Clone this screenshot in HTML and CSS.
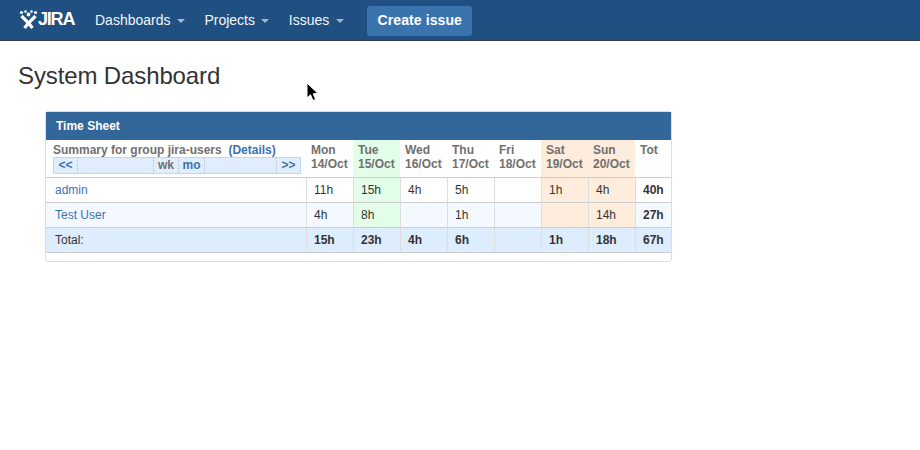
FILE: index.html
```html
<!DOCTYPE html>
<html lang="en">
<head>
<meta charset="UTF-8">
<title>System Dashboard</title>
<link rel="stylesheet" href="styles.css">
</head>
<body>
<header class="topbar">
    <a class="logo" href="#">
        <svg class="logo-icon" width="19" height="20" viewBox="0 0 19 20">
            <circle cx="2.5" cy="2.5" r="1.6" fill="#fff"/>
            <circle cx="6.5" cy="1.6" r="1.3" fill="#fff"/>
            <circle cx="12.5" cy="1.6" r="1.3" fill="#fff"/>
            <circle cx="16.5" cy="2.5" r="1.6" fill="#fff"/>
            <circle cx="9.5" cy="4.5" r="1.9" fill="#fff"/>
            <path d="M2.5 6 L9.5 13 L5.5 18 M16.5 6 L9.5 13 L13.5 18" fill="none" stroke="#fff" stroke-width="3.2"/>
        </svg>
        <span class="logo-text">JIRA</span>
    </a>
    <nav class="menu">
        <a href="#">Dashboards <i class="caret"></i></a>
        <a href="#">Projects <i class="caret"></i></a>
        <a href="#">Issues <i class="caret"></i></a>
    </nav>
    <button class="create-btn">Create issue</button>
</header>

<h1 class="page-title">System Dashboard</h1>

<section class="gadget">
    <div class="gadget-title">Time Sheet</div>
    <table class="sheet">
        <thead>
            <tr>
                <th class="summary">
                    <div class="summary-text">Summary for group jira-users &nbsp;<a href="#">(Details)</a></div>
                    <div class="pager">
                        <a class="p-prev" href="#">&lt;&lt;</a>
                        <span class="p-fill"></span>
                        <span class="p-wk">wk</span>
                        <a class="p-mo" href="#">mo</a>
                        <span class="p-fill"></span>
                        <a class="p-next" href="#">&gt;&gt;</a>
                    </div>
                </th>
                <th>Mon<br>14/Oct</th>
                <th class="today">Tue<br>15/Oct</th>
                <th>Wed<br>16/Oct</th>
                <th>Thu<br>17/Oct</th>
                <th>Fri<br>18/Oct</th>
                <th class="weekend">Sat<br>19/Oct</th>
                <th class="weekend">Sun<br>20/Oct</th>
                <th class="tot-head">Tot</th>
            </tr>
        </thead>
        <tbody>
            <tr>
                <td class="name"><a href="#">admin</a></td>
                <td>11h</td>
                <td class="today">15h</td>
                <td>4h</td>
                <td>5h</td>
                <td></td>
                <td class="weekend">1h</td>
                <td class="weekend">4h</td>
                <td class="tot">40h</td>
            </tr>
            <tr class="alt">
                <td class="name"><a href="#">Test User</a></td>
                <td>4h</td>
                <td class="today">8h</td>
                <td></td>
                <td>1h</td>
                <td></td>
                <td class="weekend"></td>
                <td class="weekend">14h</td>
                <td class="tot">27h</td>
            </tr>
            <tr class="total">
                <td class="name">Total:</td>
                <td>15h</td>
                <td>23h</td>
                <td>4h</td>
                <td>6h</td>
                <td></td>
                <td>1h</td>
                <td>18h</td>
                <td>67h</td>
            </tr>
        </tbody>
    </table>
</section>

<svg class="pointer" width="14" height="22" viewBox="0 0 14 22">
    <path d="M1 1 L1 16 L4.5 12.8 L7 18.5 L9.6 17.4 L7.2 11.8 L12 11.5 Z" fill="#000" stroke="#fff" stroke-width="1"/>
</svg>
</body>
</html>
```

FILE: styles.css
```css
* {
    box-sizing: border-box;
}

body {
    margin: 0;
    padding: 0;
    background-color: #fff;
    color: #333;
    font-family: "Liberation Sans", Arial, sans-serif;
    font-size: 14px;
}

a {
    color: #3b73af;
    text-decoration: none;
}

.topbar {
    display: flex;
    align-items: center;
    height: 41px;
    padding-left: 19px;
    background-color: #205081;
    border-bottom: 1px solid #2e3d54;
}

.logo {
    display: flex;
    align-items: center;
    width: 56px;
    height: 20px;
    margin-top: -1px;
}

.logo-icon {
    flex: none;
}

.logo-text {
    margin-left: 0;
    color: #fff;
    font-size: 18px;
    font-weight: bold;
    letter-spacing: -1.2px;
}

.menu {
    display: flex;
    margin-left: 20px;
}

.menu a {
    margin-right: 19.5px;
    color: #f0f6fc;
    line-height: 20px;
}

.caret {
    display: inline-block;
    margin-left: 2.5px;
    vertical-align: 2px;
    border-top: 4px solid #a4b8cd;
    border-left: 4px solid transparent;
    border-right: 4px solid transparent;
}

.create-btn {
    align-self: flex-start;
    width: 105px;
    height: 30px;
    margin: 6px 0 0 4px;
    padding: 0 0 2px;
    border: none;
    border-radius: 3px;
    background-color: #3b73af;
    color: #fff;
    font-family: inherit;
    font-size: 14px;
    font-weight: bold;
    letter-spacing: 0.1px;
}

.page-title {
    margin: 20px 0 20px 18px;
    color: #333;
    font-size: 24px;
    font-weight: normal;
    letter-spacing: -0.12px;
    line-height: 30px;
}

.gadget {
    width: 627px;
    height: 151px;
    margin-left: 45px;
    border: 1px solid #ddd;
    border-radius: 3px;
}

.gadget-title {
    height: 28px;
    padding-left: 10px;
    background-color: #336699;
    color: #fff;
    font-size: 12px;
    font-weight: bold;
    line-height: 28px;
}

.sheet {
    width: 625px;
    border-collapse: separate;
    border-spacing: 0;
    table-layout: fixed;
    font-size: 12px;
}

.sheet th {
    width: 47px;
    height: 38px;
    padding: 3px 0 0 5px;
    border-bottom: 1px solid #ccc;
    color: #707070;
    font-weight: bold;
    line-height: 14px;
    text-align: left;
    vertical-align: top;
}

.sheet th.summary {
    width: 260px;
    padding: 3px 5px 0 7px;
}

.sheet th.tot-head {
    width: 36px;
}

.summary-text {
    white-space: nowrap;
}

.pager {
    display: flex;
    width: 248px;
    height: 17px;
    margin-top: 0;
    border: 1px solid #bcd8f3;
    background-color: #e0edfd;
    line-height: 15px;
    text-align: center;
}

.pager > * {
    border-right: 1px dotted #b5c3d1;
}

.pager > :last-child {
    border-right: none;
}

.p-prev { width: 24px; }
.p-fill { width: 76px; }
.p-wk { width: 25px; }
.p-mo { width: 26px; }
.p-fill:nth-child(5) { width: 72px; }
.p-next { width: 23px; }

.sheet td {
    height: 25px;
    padding: 0 0 0 7px;
    border-left: 1px solid #ddd;
    border-bottom: 1px solid #ccc;
    line-height: 24px;
}

.sheet td.name {
    padding-left: 9px;
    border-left: none;
}

.sheet td.tot,
.total td {
    font-weight: bold;
}

.sheet .total td.name {
    font-weight: normal;
}

.alt td {
    background-color: #f4f9ff;
}

.total td {
    background-color: #deedfd;
}

.sheet .today {
    background-color: #e2fde8;
}

.sheet .weekend {
    background-color: #feeddd;
}

.pointer {
    position: absolute;
    left: 306px;
    top: 82px;
}
```
